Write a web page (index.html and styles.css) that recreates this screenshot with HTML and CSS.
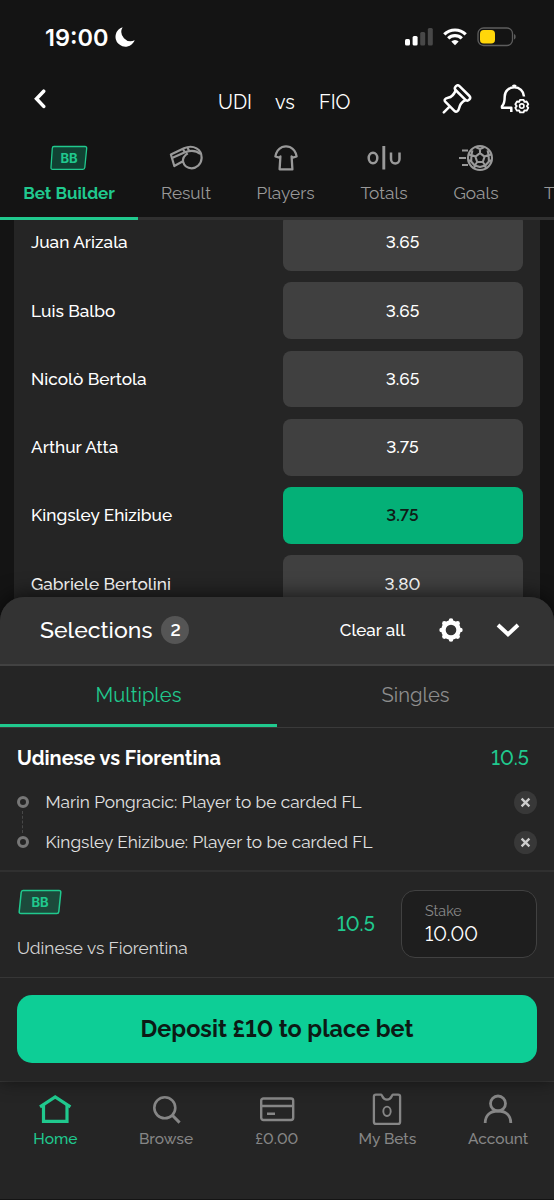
FILE: index.html
```html
<!DOCTYPE html>
<html lang="en">
<head>
<meta charset="utf-8">
<title>UDI vs FIO</title>
<link rel="stylesheet" href="styles.css">
</head>
<body>
<div class="app">
  <div class="status">
    <span class="clock">19:00</span>
    <svg class="moon" width="20" height="20" viewBox="0 0 20 20"><path fill="#fff" d="M7.600.300A9.900 9.900 0 1 0 19.700 13.200 9.300 9.300 0 0 1 7.600.300Z"/></svg>
    <svg class="signal" width="28" height="18" viewBox="0 0 28 18"><g fill="#fff"><rect y="11" width="5" height="6.500" rx="1.500"/><rect x="7.600" y="8" width="5" height="9.500" rx="1.500"/></g><g fill="#484848"><rect x="15.200" y="4" width="5" height="13.500" rx="1.500"/><rect x="22.800" y="0" width="5" height="17.500" rx="1.500"/></g></svg>
    <svg class="wifi" width="24" height="18" viewBox="0 0 24 18"><g fill="none" stroke="#fff" stroke-width="3.200"><path d="M1.300 6.400a15.200 15.200 0 0 1 21.400 0"/><path d="M5.200 10.400a9.700 9.700 0 0 1 13.600 0"/></g><path fill="#fff" d="M8.300 13.400a5.300 5.300 0 0 1 7.400 0L12 17.300Z"/></svg>
    <svg class="battery" width="40" height="20" viewBox="0 0 40 20"><rect x="1" y="1" width="34.500" height="17.500" rx="5.500" fill="none" stroke="#5d5d5d" stroke-width="1.300"/><rect x="3" y="3" width="15" height="13.500" rx="3.800" fill="#ffd60a"/><path fill="#5d5d5d" d="M37 7c2.200.7 2.200 4.800 0 5.500Z"/></svg>
  </div>

  <header class="header">
    <svg class="back" width="14" height="20" viewBox="0 0 14 20"><path d="M10.700 2.200 3.500 9.800l7.200 7.600" fill="none" stroke="#fff" stroke-width="3.500" stroke-linecap="round" stroke-linejoin="miter"/></svg>
    <h1 class="teams"><span class="home">UDI</span><span class="vs">vs</span><span class="away">FIO</span></h1>
    <svg class="pin" width="30" height="30" viewBox="0 0 30 30" fill="none" stroke="#fff" stroke-width="2.500" stroke-linecap="round" stroke-linejoin="round"><rect x="11" y="6.200" width="19" height="5.600" rx="2.800" transform="rotate(45 20.500 9)"/><path d="M13.500 6.500c-1.300 4-3.500 6.500-7.500 7.200-3.500.6-4.200 2.500-2.300 4.400l8.700 8.700c1.800 1.800 4 .6 4.600-2.200.8-4 2.300-6.500 6.500-8.400M7.800 22.300l-6 6"/></svg>
    <svg class="bell" width="30" height="30" viewBox="0 0 30 30" fill="none" stroke="#fff" stroke-linecap="round" stroke-linejoin="round"><path stroke-width="2.500" stroke-linecap="butt" d="M24 12.500C23.700 7 19.600 3.300 14.300 3.300S4.700 7.300 4.700 12.500c0 5-.4 7.600-2.700 9.700v1.500h9.300v4.300M12.800 2.600q1.500-1.700 3 0"/><path stroke-width="1.800" d="m20 15.800 3.600 0 .8 2 2.200-.3 1.700 2.800-1.400 1.800 1.400 1.800-1.700 2.800-2.200-.3-.8 2h-3.600l-.8-2-2.200.3-1.700-2.800 1.400-1.800-1.400-1.800 1.700-2.800 2.200.3Z"/><circle cx="21.800" cy="22.100" r="2.200" stroke-width="1.600"/></svg>
  </header>

  <nav class="markets">
    <a class="market active"><svg class="bb" width="38" height="26" viewBox="0 0 38 26"><path d="M4 1.500h31q1.800 0 1.700 1.800L34.800 22.500q-.2 1.900-2 1.900H2.600q-1.800 0-1.600-1.900L2.300 3.300q.1-1.800 1.700-1.800Z" fill="#104233" stroke="#20c98e" stroke-width="1.300"/><text class="bb-text" x="19" y="18.200">BB</text></svg><span>Bet Builder</span></a>
    <a class="market"><svg width="34" height="26" viewBox="0 0 34 26" fill="none" stroke="#999" stroke-width="2.200" stroke-linejoin="round"><path d="M1.900 9.500 15 3.200C24.500-.8 33 4.300 32.600 13.300c-.4 6-5 10-9.900 10-5 0-7.800-3.200-8.800-7L5.300 21Z"/><path d="m3.600 12.800 12.900-5.700c5.500-2 11-1.500 14.800 1.900M14 16.700c-.4-3.200.9-6 4.800-8.300M13.800 4l2 3.200M18.500 2.500l1.600 3.500"/></svg><span>Result</span></a>
    <a class="market"><svg width="26" height="26" viewBox="0 0 26 26" fill="none" stroke="#999" stroke-width="2.300" stroke-linejoin="round"><path d="M9.200 2Q13 .6 16.800 2 22.500 4.600 23.600 11.500l-4 1.200-1-1.200.8 12.800H6.600l.8-12.800-1 1.200-4-1.200Q3.500 4.600 9.200 2Z"/></svg><span>Players</span></a>
    <a class="market"><svg width="34" height="26" viewBox="0 0 34 26" fill="none" stroke="#999" stroke-width="2.500"><ellipse cx="6" cy="13" rx="4.300" ry="5.300"/><path d="M16.800 1v23.500" stroke-width="2.900"/><path d="M24 7.500v6.400c0 6 8.500 6 8.500 0V7.500"/></svg><span>Totals</span></a>
    <a class="market"><svg width="36" height="28" viewBox="0 0 36 28" fill="none" stroke="#999" stroke-width="2.100" stroke-linejoin="round"><circle cx="22" cy="14" r="12"/><path d="m22 9.200 4.600 3.400-1.800 5.400h-5.600l-1.800-5.400ZM22 9.200V5M26.600 12.600l4-1.500M24.800 18l2.500 3.500M19.200 18l-2.500 3.500M17.400 12.600l-4-1.500M17.500 3 22 5l4.500-2M33.700 10.500l-3.100.6-1-4.700M34 16l-3.100 1.500-.3-6.400M30.900 17.500l-3.600 4 .5 3M27.300 21.500 22 23l-5.300-1.500-.5 3M10.200 16l3 1.500.2-6.400-3.100-.6M13.200 17.500l3.500 4M13.400 11.100l1-4.700"/><path stroke-width="2.200" d="M4 6.500h6M1 14h7M4 21h6"/></svg><span>Goals</span></a>
    <a class="market"><span class="last">T</span></a>
  </nav>

  <main class="list">
    <div class="row"><span>Juan Arizala</span><button class="odds">3.65</button></div>
    <div class="row"><span>Luis Balbo</span><button class="odds">3.65</button></div>
    <div class="row"><span>Nicolò Bertola</span><button class="odds">3.65</button></div>
    <div class="row"><span>Arthur Atta</span><button class="odds">3.75</button></div>
    <div class="row"><span>Kingsley Ehizibue</span><button class="odds selected">3.75</button></div>
    <div class="row"><span>Gabriele Bertolini</span><button class="odds">3.80</button></div>
  </main>

  <section class="slip">
    <div class="slip-head">
      <h2 class="slip-title">Selections</h2><span class="count">2</span>
      <span class="clear">Clear all</span>
      <svg class="gear" width="24" height="24" viewBox="0 0 24 24"><g fill="#fff"><circle cx="12" cy="12" r="9.800"/><circle cx="12" cy="2.600" r="2.300"/><circle cx="18.600" cy="5.400" r="2.300"/><circle cx="21.400" cy="12" r="2.300"/><circle cx="18.600" cy="18.600" r="2.300"/><circle cx="12" cy="21.400" r="2.300"/><circle cx="5.400" cy="18.600" r="2.300"/><circle cx="2.600" cy="12" r="2.300"/><circle cx="5.400" cy="5.400" r="2.300"/></g><circle cx="12" cy="12" r="5.300" fill="#333"/></svg>
      <svg class="down" width="24" height="16" viewBox="0 0 24 16"><path d="m2 3 10 9.300L22 3" fill="none" stroke="#fff" stroke-width="3.900"/></svg>
    </div>
    <div class="slip-tabs"><span class="slip-tab on">Multiples</span><span class="slip-tab">Singles</span></div>
    <div class="event">
      <div class="event-head"><h3>Udinese vs Fiorentina</h3><span class="price">10.5</span></div>
      <div class="leg linked"><i class="dot"></i><span>Marin Pongracic: Player to be carded FL</span><svg class="remove" width="23" height="23" viewBox="0 0 23 23"><circle cx="11.500" cy="11.500" r="11.500" fill="#383838"/><path d="m7.600 7.600 7.800 7.800m0-7.800-7.800 7.800" stroke="#ccc" stroke-width="2.300"/></svg></div>
      <div class="leg"><i class="dot"></i><span>Kingsley Ehizibue: Player to be carded FL</span><svg class="remove" width="23" height="23" viewBox="0 0 23 23"><circle cx="11.500" cy="11.500" r="11.500" fill="#383838"/><path d="m7.600 7.600 7.800 7.800m0-7.800-7.800 7.800" stroke="#ccc" stroke-width="2.300"/></svg></div>
    </div>
    <div class="stake-row">
      <div class="stake-info"><svg class="bb-large" width="44" height="26" viewBox="0 0 44 26"><path d="M5 1.500h36q2 0 1.800 1.900l-2 19.200q-.2 1.900-2 1.900H3q-2 0-1.800-1.900L3.200 3.400Q3.400 1.500 5 1.500Z" fill="#1c4a3b" stroke="#20c98e" stroke-width="1.500"/><text class="bb-text" x="22" y="18.300">BB</text></svg><span>Udinese vs Fiorentina</span></div>
      <span class="price">10.5</span>
      <label class="stake"><span class="stake-label">Stake</span><span class="stake-value">10.00</span></label>
    </div>
    <div class="deposit-row"><button class="deposit">Deposit £10 to place bet</button></div>
  </section>

  <nav class="bottom">
    <a class="item active"><svg width="34" height="34" viewBox="0 0 34 34" fill="none" stroke="#20c98e" stroke-width="3.200"><path d="M5.500 13v16.400h23.500V13"/><path d="M2 14.900 17.200 5l15.200 9.900"/></svg><span>Home</span></a>
    <a class="item"><svg width="34" height="34" viewBox="0 0 34 34" fill="none" stroke="#868686" stroke-width="2.600"><circle cx="15.800" cy="15.800" r="10.500"/><path d="m23.300 23.300 7.300 7.300" stroke-width="3"/></svg><span>Browse</span></a>
    <a class="item"><svg width="36" height="34" viewBox="0 0 36 34" fill="none" stroke="#868686" stroke-width="2.400"><rect x="2.200" y="6.500" width="32" height="21.500" rx="2.200"/><path d="M2.200 14h32M8 21.800h8"/></svg><span>£0.00</span></a>
    <a class="item"><svg width="34" height="34" viewBox="0 0 34 34" fill="none" stroke="#868686" stroke-width="2.300" stroke-linejoin="round"><path d="M5.900 2.700h5.300c1.200 0 1 4.900 5.800 4.900s4.600-4.900 5.800-4.900h5.300q2 0 2 1.900v25.100q0 2.200-2 2.200H5.900q-2 0-2-2.200V4.600q0-1.900 2-1.900Z"/><ellipse cx="17" cy="19.300" rx="3.700" ry="4.700" stroke-width="1.900"/></svg><span>My Bets</span></a>
    <a class="item"><svg width="34" height="34" viewBox="0 0 34 34" fill="none" stroke="#868686" stroke-width="2.800"><circle cx="17" cy="11.500" r="7.500"/><path d="M4.200 31C4.200 23 9.500 19 17 19s12.800 4 12.800 12"/></svg><span>Account</span></a>
  </nav>
</div>
</body>
</html>
```
FILE: styles.css
```css
* { box-sizing: border-box; }
body { margin: 0; background: #141414; }
.app {
  width: 554px; height: 1200px; overflow: hidden;
  display: flex; flex-direction: column;
  background: #141414; color: #fff;
  font-family: Raleway, Lato, "Open Sans", sans-serif;
  font-size: 17.250px; font-variant-numeric: lining-nums; white-space: nowrap;
}
h1, h2, h3 { margin: 0; font-weight: 400; }
button { border: 0; padding: 0; color: inherit; font: inherit; font-variant-numeric: lining-nums; }
svg { display: block; flex: none; }

.status { height: 75px; flex: none; display: flex; align-items: center; padding: 0 37px 1px 45px; }
.clock { font: 600 23.500px Inter, sans-serif; width: 70px; }
.signal { margin: 0 10px 0 auto; }
.wifi { margin-right: 10px; }

.header { height: 55px; flex: none; display: flex; align-items: center; padding: 0 24px 8px 33px; }
.teams { display: flex; margin: 6px auto 0 171px; font-size: 19.800px; line-height: 24px; }
.home { width: 57px; }
.vs { width: 44px; }
.pin { margin-right: 28px; }

.markets { height: 90px; flex: none; display: flex; border-bottom: 3px solid #303030; color: #999; }
.market { height: 90px; flex: none; width: 99px; display: flex; flex-direction: column; align-items: center; }
.market svg { height: 28px; margin-top: 14px; }
.market span { line-height: 24px; margin-top: 9px; }
.market:nth-child(1) { width: 138px; }
.market:nth-child(2) { width: 96px; }
.market:nth-child(3) { width: 103px; }
.market:nth-child(4) { width: 94px; }
.market:nth-child(5) { width: 90px; }
.market .last { margin: 51px 0 0 23px; align-self: flex-start; }
.market.active { color: #20c98e; font-weight: 700; font-size: 17px; border-bottom: 3px solid #20c98e; }
.bb-text { font: 700 13px Inter, sans-serif; fill: #20c98e; text-anchor: middle; }

.list {
  height: 401px; flex: none; overflow: hidden; margin: 0 14px; padding: 0 17.500px 0 17px;
  background: #252525; font-weight: 500;
}
.row { height: 56.700px; margin-bottom: 11.600px; display: flex; align-items: center; justify-content: space-between; }
.row:first-child { margin-top: -6px; }
.odds { width: 240px; height: 100%; border-radius: 8px; background: #404040; }
.odds.selected { background: #04b077; color: #101c17; font-weight: 600; font-size: 17px; }

.slip { position: relative; margin-top: -24px; height: 484px; flex: none; background: #252525; border-radius: 24px 24px 0 0; box-shadow: 0 -2px 20px rgba(0,0,0,.65); }
.slip-head { height: 69px; display: flex; align-items: center; padding: 0 34px 2px 40px; background: #333; border-bottom: 2px solid #424242; border-radius: 24px 24px 0 0; }
.slip-title { font-size: 23px; font-weight: 500; }
.count { width: 28px; height: 28px; margin-left: 9px; border-radius: 50%; background: #555; text-align: center; font-size: 17px; line-height: 28px; font-weight: 600; }
.clear { margin-left: auto; margin-right: 34px; font-weight: 500; font-size: 17px; }
.gear { margin-right: 33px; }
.slip-tabs { height: 62px; display: flex; border-bottom: 1px solid #3a3a3a; }
.slip-tab { height: 61px; flex: 1; text-align: center; font-size: 20.200px; line-height: 58px; color: #8d8d8d; }
.slip-tab.on { color: #20c98e; border-bottom: 3px solid #20c98e; }
.event { height: 144px; padding: 14px 17px 0; border-bottom: 2px solid #303030; }
.event-head { display: flex; justify-content: space-between; padding-right: 8px; height: 40px; line-height: 32px; }
.event-head h3 { font-size: 19.900px; font-weight: 700; }
.price { font-size: 20px; color: #20c98e; font-weight: 500; }
.leg { height: 40px; display: flex; align-items: center; color: #e2e2e2; position: relative; }
.dot { width: 12px; height: 12px; border: 3px solid #777; border-radius: 50%; margin-right: 16.500px; }
.linked::after { content: ""; position: absolute; left: 5px; top: 29px; height: 22px; border-left: 1.500px dashed #484848; }
.remove { margin-left: auto; }
.stake-row { height: 106px; display: flex; align-items: center; padding: 0 17px 1px; border-bottom: 1px solid #363636; }
.stake-info { width: 320px; color: #d5d5d5; }
.bb-large { margin-left: .5px; }
.stake-info span { display: block; margin-top: 22px; line-height: 22px; }
.stake { width: 136px; height: 68px; margin-left: auto; padding: 10px 23px; border: 1.500px solid #414141; border-radius: 14px; background: #1e1e1e; }
.stake-label { display: block; font-size: 14.300px; line-height: 20px; color: #888; }
.stake-value { display: block; font-size: 20px; line-height: 26px; }
.deposit-row { padding: 17px 17px 0; }
.deposit { width: 520px; height: 68px; padding-bottom: 2px; border-radius: 15px; background: #0dce96; color: #0c1a15; font-size: 23.400px; font-weight: 700; }

.bottom { height: 118px; flex: none; display: flex; background: #252525; border-top: 1px solid #3a3a3a; font-size: 15.500px; color: #868686; }
.item { width: 110.700px; display: flex; flex-direction: column; align-items: center; padding-top: 10px; }
.item span { line-height: 20px; margin-top: 3px; font-weight: 500; }
.item.active { color: #20c98e; }
```
